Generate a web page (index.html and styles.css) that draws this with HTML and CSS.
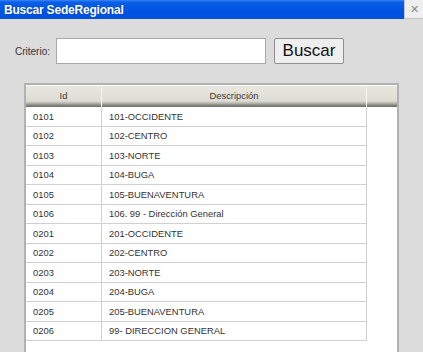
FILE: index.html
```html
<!DOCTYPE html>
<html>
   <head>
      <meta charset="UTF-8">
      <title>Buscar SedeRegional</title>
      <link rel="stylesheet" href="styles.css">
   </head>
   <body>
      <div class="titlebar">
         <span class="title">Buscar SedeRegional</span>
         <span class="close">&#x2715;</span>
      </div>

      <form class="search" action="">
         <label for="criterio">Criterio:</label>
         <input type="text" id="criterio" name="criterio" />
         <button type="button" class="button-search">Buscar</button>
      </form>

      <div class="panel">
         <div class="grid-head">
            <div class="head-cell">Id</div>
            <div class="head-cell">Descripción</div>
            <div class="head-cell"></div>
         </div>
         <div class="grid-body">
            <div class="row"><div class="cell">0101</div><div class="cell">101-OCCIDENTE</div></div>
            <div class="row"><div class="cell">0102</div><div class="cell">102-CENTRO</div></div>
            <div class="row"><div class="cell">0103</div><div class="cell">103-NORTE</div></div>
            <div class="row"><div class="cell">0104</div><div class="cell">104-BUGA</div></div>
            <div class="row"><div class="cell">0105</div><div class="cell">105-BUENAVENTURA</div></div>
            <div class="row"><div class="cell">0106</div><div class="cell">106. 99 - Dirección General</div></div>
            <div class="row"><div class="cell">0201</div><div class="cell">201-OCCIDENTE</div></div>
            <div class="row"><div class="cell">0202</div><div class="cell">202-CENTRO</div></div>
            <div class="row"><div class="cell">0203</div><div class="cell">203-NORTE</div></div>
            <div class="row"><div class="cell">0204</div><div class="cell">204-BUGA</div></div>
            <div class="row"><div class="cell">0205</div><div class="cell">205-BUENAVENTURA</div></div>
            <div class="row"><div class="cell">0206</div><div class="cell">99- DIRECCION GENERAL</div></div>
         </div>
      </div>
   </body>
</html>
```

FILE: styles.css
```css
*
{
   box-sizing: border-box;
}

html,
body
{
   height: 100%;
}

body
{
   margin: 0;
   overflow: hidden;
   background: #dcdcdc;
   font-family: "Liberation Sans", Arial, sans-serif;
   color: #333333;
}

.titlebar
{
   display: flex;
   align-items: center;
   justify-content: space-between;
   height: 19px;
   background: linear-gradient(to bottom, #3a86f2 0, #0a5fe8 2px, #0055e3 10px, #0050da 100%);
}

.title
{
   padding-left: 4px;
   font-size: 12px;
   font-weight: bold;
   letter-spacing: -0.2px;
   color: #ffffff;
   text-shadow: 0 0 1px #0030a0;
}

.close
{
   display: flex;
   align-items: center;
   justify-content: center;
   width: 19px;
   height: 19px;
   background: #efefef;
   border-left: 1px solid #c4c4c4;
   border-bottom: 1px solid #c4c4c4;
   color: #8a8a8a;
   font-size: 11px;
}

.search
{
   display: flex;
   align-items: center;
   margin: 0;
   padding: 19px 0 0 15px;
}

.search label
{
   font-size: 10px;
   color: #333333;
   margin-right: 6px;
}

.search input
{
   width: 210px;
   height: 26px;
   margin: 0 8px 0 0;
   border: 1px solid #a8a8a8;
   background: #ffffff;
}

.button-search
{
   width: 70px;
   height: 26px;
   padding: 0;
   border: 1px solid #8f8f8f;
   border-radius: 2px;
   background: #efefef;
   font-family: "Liberation Sans", Arial, sans-serif;
   font-size: 17px;
   color: #111111;
}

.panel
{
   width: 375px;
   height: 269px;
   margin: 19px 0 0 24px;
   padding-top: 1px;
   border: 2px solid #b2b2b2;
   border-bottom: 0;
   background: #ffffff;
}

.grid-head
{
   display: grid;
   grid-template-columns: 76px 265px 1fr;
   height: 21px;
   background: linear-gradient(to bottom, #e8e8e0 0, #dedcd4 15px, #bcbcb4 17px, #8c8c86 19px, #6a6a66 21px);
}

.head-cell
{
   padding-top: 4px;
   border-right: 1px solid #f4f4f0;
   text-align: center;
   font-size: 9.4px;
   color: #3a3a3a;
}

.head-cell:last-child
{
   border-right: 0;
}

.grid-body
{
   width: 341px;
   border-right: 1px solid #d0d0d0;
}

.row
{
   display: grid;
   grid-template-columns: 76px 1fr;
   height: 19.5px;
   border-bottom: 1px solid #d0d0d0;
}

.cell
{
   display: flex;
   align-items: center;
   padding-left: 7px;
   font-size: 9.4px;
   color: #333333;
}

.cell:first-child
{
   border-right: 1px solid #d0d0d0;
}
```
